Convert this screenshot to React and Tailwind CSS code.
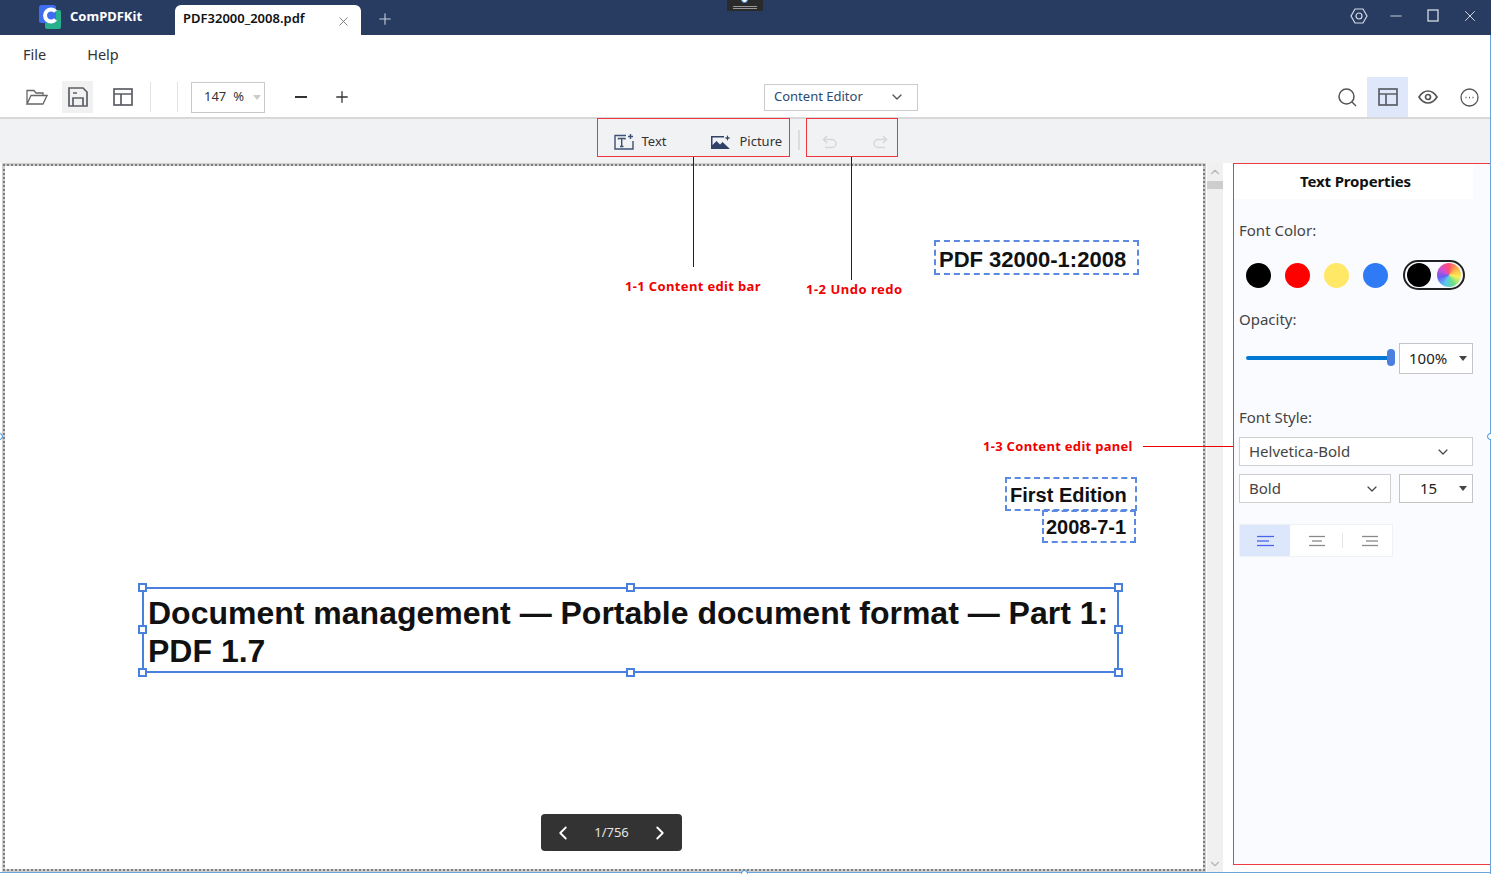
import React from 'react';
import { ChevronDown, ChevronLeft, ChevronRight, ChevronUp, Minus, Plus, X } from 'lucide-react';

const swatches = ['bg-black', 'bg-[#ff0000]', 'bg-[#ffe866]', 'bg-[#2f7bf6]'];

function Logo() {
  return (
    <svg width="22" height="24" viewBox="0 0 22 24">
      <rect x="6" y="5" width="16" height="19" rx="2" fill="#27b08b" />
      <rect x="0" y="0" width="17" height="18" rx="2.5" fill="#3e6df0" />
      <path d="M16.5 6.5A6 6 0 1 0 16.5 14.5" fill="none" stroke="#fff" strokeWidth="4" />
    </svg>
  );
}

function LayoutIcon() {
  return (
    <svg width="20" height="18" viewBox="0 0 20 18" fill="none" stroke="#5c5f66" strokeWidth="1.7">
      <rect x="1" y="1" width="18" height="16" />
      <path d="M1 6h18M8 6v11" />
    </svg>
  );
}

function Triangle({ color = 'border-t-[#444]' }) {
  return <span className={`block h-0 w-0 border-x-4 border-t-[5px] border-x-transparent ${color}`} />;
}

function AlignIcon({ lines, color }) {
  return (
    <svg width="18" height="12" viewBox="0 0 18 12" stroke={color} strokeWidth="1.3">
      {lines.map((l, i) => (
        <path key={i} d={`M${l[0]} ${1.5 + i * 4.5}H${l[1]}`} />
      ))}
    </svg>
  );
}

function TitleBar() {
  return (
    <div className="flex h-[35px] items-end bg-[#283c62] text-white">
      <div className="mb-[6px] ml-[39px] flex w-[136px] items-center gap-[9px]">
        <Logo />
        <span className="text-[13px] font-bold">ComPDFKit</span>
      </div>
      <div className="flex h-[30px] w-[186px] items-start justify-between rounded-t-md bg-white pl-2 pr-[10px] text-[#111]">
        <span className="mt-[4px] text-[13px] font-semibold">PDF32000_2008.pdf</span>
        <X size={15} strokeWidth={1.3} className="mt-[9px] text-[#666]" />
      </div>
      <Plus size={18} strokeWidth={1.5} className="mb-[7px] ml-[15px] text-[#c5cbd6]" />
      <div className="ml-auto mb-[10px] flex items-center gap-[19px] pr-[12px] text-[#d5dae3]">
        <svg width="18" height="18" viewBox="0 0 18 18" fill="none" stroke="currentColor" strokeWidth="1.2">
          <path d="M5 2h8l4 7-4 7H5L1 9z" />
          <circle cx="9" cy="9" r="3" />
        </svg>
        <Minus size={18} strokeWidth={1.2} />
        <svg width="18" height="18" viewBox="0 0 18 18" fill="none" stroke="currentColor" strokeWidth="1.3">
          <rect x="4" y="3" width="10" height="11" />
        </svg>
        <X size={18} strokeWidth={1.3} />
      </div>
    </div>
  );
}

function Toolbar() {
  return (
    <div className="flex h-[41px] items-center pt-px text-[#333]">
      <svg className="ml-[26px]" width="22" height="16" viewBox="0 0 22 16" fill="none" stroke="#666" strokeWidth="1.3">
        <path d="M1 15V1.5h7l2 2.5h7v2.5M1 15h16l4-8.500H5z" />
      </svg>
      <div className="ml-[14px] flex h-[32px] w-[31px] items-center justify-center bg-[#f1f1f1]">
        <svg width="20" height="20" viewBox="0 0 20 20" fill="none" stroke="#5c5f66" strokeWidth="1.7">
          <path d="M1 1h14l4 4v14H1z" />
          <path d="M5 19v-8h10v8M5 6h4" />
        </svg>
      </div>
      <div className="ml-[20px]"><LayoutIcon /></div>
      <div className="ml-[17px] h-[30px] w-px bg-[#e3e3e3]" />
      <div className="ml-[26px] h-[30px] w-px bg-[#e3e3e3]" />
      <div className="ml-[13px] flex h-[31px] w-[74px] items-center border border-[#c9c9c9] pl-[12px] pr-[3px] text-[13px]">
        <span>147</span>
        <span className="ml-[7px]">%</span>
        <span className="ml-auto"><Triangle color="border-t-[#ccc]" /></span>
      </div>
      <div className="ml-[30px] h-[2px] w-[12px] bg-[#333]" />
      <Plus size={18} strokeWidth={1.7} className="ml-[26px]" />
      <div className="ml-[413px] flex h-[27px] w-[154px] items-center justify-between border border-[#ccc] pl-[9px] pr-[12px] text-[13px] text-[#2d4a73]">
        <span>Content Editor</span>
        <ChevronDown size={16} strokeWidth={2} className="text-[#555]" />
      </div>
      <div className="ml-auto flex h-full items-center pr-[12px]">
        <svg width="19" height="19" viewBox="0 0 19 19" fill="none" stroke="#555" strokeWidth="1.5">
          <circle cx="8.500" cy="8.500" r="7.500" />
          <path d="M14 14l4 4" />
        </svg>
        <div className="ml-[10px] flex h-[40px] w-[41px] items-center justify-center bg-[#dfe8fb]">
          <LayoutIcon />
        </div>
        <svg className="ml-[10px]" width="20" height="14" viewBox="0 0 20 14" fill="none" stroke="#555" strokeWidth="1.7">
          <path d="M1 7c2.500-4 5.500-6 9-6s6.500 2 9 6c-2.500 4-5.500 6-9 6s-6.500-2-9-6z" />
          <circle cx="10" cy="7" r="2.500" />
        </svg>
        <svg className="ml-[22px]" width="19" height="19" viewBox="0 0 19 19" fill="none" stroke="#555" strokeWidth="1.3">
          <circle cx="9.500" cy="9.500" r="8.500" />
          <path d="M5.500 9.500h1M9 9.500h1M12.500 9.500h1" strokeWidth="1.6" />
        </svg>
      </div>
    </div>
  );
}

function EditBar() {
  return (
    <div className="flex h-[46px] items-start justify-center border-t-2 border-[#d8d8d8] bg-[#f1f2f4] pl-[3px] text-[13px] text-[#333]">
      <div className="-mt-px flex h-[39px] w-[193px] items-center border border-[#f0353d] pt-[8px]">
        <svg className="ml-[16px]" width="20" height="16" viewBox="0 0 20 16" fill="none" stroke="#3e5175" strokeWidth="1.4">
          <path d="M12 1.500H1v13.500h18V7" />
          <path d="M4.500 5.500v-1H11v1M7.700 4.500v8M6 12.500h3.500" />
          <path d="M16.500 0v5M14 2.500h5" />
        </svg>
        <span className="ml-[8px]">Text</span>
        <svg className="ml-[45px]" width="20" height="16" viewBox="0 0 20 16">
          <path d="M0 2h13v1.500H1.500V11l4-4 3.500 3.500 2.500-2.500 7 6.500V15H0z" fill="#2f4369" />
          <path d="M16.500 1l.8 2.200 2.200.8-2.200.8-.8 2.200-.8-2.200-2.200-.8 2.200-.8z" fill="#2f4369" />
        </svg>
        <span className="ml-[8px]">Picture</span>
      </div>
      <div className="ml-[8px] mt-[11px] h-[20px] w-[2px] bg-[#dcdcdc]" />
      <div className="-mt-px ml-[6px] flex h-[39px] w-[92px] items-center border border-[#f0353d] pt-[8px]">
        <svg className="ml-[15px]" width="15" height="14" viewBox="0 0 15 14" fill="none" stroke="#d6d7d9" strokeWidth="1.5">
          <path d="M5 1L1.500 4.500 5 8M1.500 4.500H10a3.800 3.800 0 0 1 0 8H3" />
        </svg>
        <svg className="ml-[36px]" width="15" height="14" viewBox="0 0 15 14" fill="none" stroke="#d6d7d9" strokeWidth="1.5">
          <path d="M10 1l3.500 3.500L10 8M13.500 4.500H5a3.800 3.800 0 0 0 0 8h7" />
        </svg>
      </div>
    </div>
  );
}

function Handle({ className }) {
  return <span className={`absolute h-[9px] w-[9px] border-2 border-[#4a80dd] bg-white ${className}`} />;
}

function PdfPage() {
  return (
    <div className="h-full w-[1204px] bg-[#cfcfcf] p-px">
      <div className="relative h-full border-2 border-dotted border-[#7d7d7d] bg-white bg-clip-padding font-['Liberation_Sans',sans-serif] font-bold text-[#111]">
        <div className="absolute left-[929px] top-[74px] flex h-[35px] w-[205px] items-center whitespace-nowrap border-2 border-dashed border-[#5b8ae0] pl-[3px] pt-[3px] text-[22px]">
          PDF 32000-1:2008
        </div>
        <div className="absolute left-[1000px] top-[311px] flex h-[34px] w-[132px] items-center whitespace-nowrap border-2 border-dashed border-[#5b8ae0] pl-[3px] pt-[2px] text-[20px]">
          First Edition
        </div>
        <div className="absolute left-[1037px] top-[344px] flex h-[33px] w-[94px] items-center whitespace-nowrap border-2 border-dashed border-[#5b8ae0] pl-[2px] text-[20px]">
          2008-7-1
        </div>
        <div className="absolute left-[137px] top-[421px] h-[86px] w-[977px] border-2 border-[#4a80dd] pl-[4px] pt-[5px] text-[32px] leading-[38px]">
          <div className="whitespace-nowrap">Document management — Portable document format — Part 1:</div>
          <div>PDF 1.7</div>
          <Handle className="-left-[6px] -top-[6px]" />
          <Handle className="left-[482px] -top-[6px]" />
          <Handle className="-right-[6px] -top-[6px]" />
          <Handle className="-left-[6px] top-[36px]" />
          <Handle className="-right-[6px] top-[36px]" />
          <Handle className="-left-[6px] -bottom-[6px]" />
          <Handle className="left-[482px] -bottom-[6px]" />
          <Handle className="-right-[6px] -bottom-[6px]" />
        </div>
        <div className="absolute left-[536px] top-[648px] flex h-[37px] w-[141px] items-center justify-between rounded bg-[#333] px-[11px] font-['Noto_Sans',sans-serif] text-[13px] font-normal text-[#e5e5e5]">
          <ChevronLeft size={22} strokeWidth={2} className="text-white" />
          <span>1/756</span>
          <ChevronRight size={22} strokeWidth={2} className="text-white" />
        </div>
      </div>
    </div>
  );
}

function Scrollbar() {
  return (
    <div className="ml-px flex w-[16px] flex-col items-center bg-[#f0f0f0] pb-px text-[#b5b5b5]">
      <ChevronUp size={14} className="mt-[2px]" />
      <div className="mt-[2px] h-[8px] w-full bg-[#cdcdcd]" />
      <ChevronDown size={14} className="mt-auto" />
    </div>
  );
}

function Panel() {
  return (
    <div className="mb-[7px] w-[258px] border border-[#ee3a42] bg-[#fafbff] text-[#444]">
      <div className="flex h-[35px] w-[239px] items-center justify-center bg-white pl-[4px] text-[15px] font-bold tracking-[-0.15px] text-[#111]">
        Text Properties
      </div>
      <div className="pl-[5px]">
        <div className="mt-[20px] h-[22px] text-[15px] leading-[22px]">Font Color:</div>
        <div className="mt-[19px] flex h-[30px] items-center pl-[7px]">
          {swatches.map((c) => (
            <span key={c} className={`mr-[14px] h-[25px] w-[25px] rounded-full ${c}`} />
          ))}
          <div className="ml-[1px] flex h-[30px] w-[62px] items-center justify-between rounded-full border-2 border-[#222] px-[2px]">
            <span className="h-[24px] w-[24px] rounded-full bg-black" />
            <span className="h-[24px] w-[24px] rounded-full bg-[conic-gradient(#ff4d6d,#ffb347,#f6f05c,#6be08a,#58c8f0,#6b5cf0,#d64fd0,#ff4d6d)]" />
          </div>
        </div>
        <div className="mt-[18px] h-[22px] text-[15px] leading-[22px]">Opacity:</div>
        <div className="mt-[13px] flex h-[31px] items-center">
          <div className="relative -mt-[2px] ml-[7px] h-[4px] w-[146px] rounded-full bg-[#0078d4]">
            <span className="absolute -top-[7px] right-[-3px] h-[17px] w-[8px] rounded bg-[#4a7fe0]" />
          </div>
          <div className="ml-[7px] flex h-[31px] w-[74px] items-center justify-between border border-[#c4c4c4] bg-white pl-[9px] pr-[5px] text-[15px] text-[#222]">
            <span>100%</span>
            <Triangle />
          </div>
        </div>
        <div className="mt-[32px] h-[22px] text-[15px] leading-[22px]">Font Style:</div>
        <div className="mt-[9px] flex h-[29px] w-[234px] items-center justify-between border border-[#cfcfcf] bg-white pl-[9px] pr-[22px] text-[15px]">
          <span>Helvetica-Bold</span>
          <ChevronDown size={16} strokeWidth={1.8} className="-mr-[1px]" />
        </div>
        <div className="mt-[8px] flex h-[29px]">
          <div className="flex w-[152px] items-center justify-between border border-[#cfcfcf] bg-white pl-[9px] pr-[4px] text-[15px]">
            <span>Bold</span>
            <ChevronDown size={16} strokeWidth={1.8} className="mr-[6px]" />
          </div>
          <div className="ml-[8px] flex w-[74px] items-center border border-[#c4c4c4] bg-white pl-[20px] pr-[5px] text-[15px] text-[#222]">
            <span>15</span>
            <span className="ml-auto"><Triangle /></span>
          </div>
        </div>
        <div className="mt-[21px] flex h-[33px] w-[154px] border border-[#f0f1f4] bg-white">
          <div className="flex w-[51px] items-center justify-center bg-[#dde7fb]">
            <AlignIcon lines={[[1, 18], [1, 13], [1, 18]]} color="#4a63e8" />
          </div>
          <div className="flex w-[52px] items-center justify-center pl-[3px]">
            <AlignIcon lines={[[1, 17], [4, 14], [1, 17]]} color="#8a8a8a" />
          </div>
          <div className="my-[8px] w-px bg-[#e6e6e6]" />
          <div className="flex w-[50px] items-center justify-center pl-[5px]">
            <AlignIcon lines={[[1, 17], [5, 17], [1, 17]]} color="#8a8a8a" />
          </div>
        </div>
      </div>
    </div>
  );
}

function Callouts() {
  return (
    <>
      <div className="absolute left-[693px] top-[157px] h-[110px] w-px bg-[#222]" />
      <div className="absolute left-[851px] top-[157px] h-[123px] w-px bg-[#222]" />
      <div className="absolute left-[1143px] top-[446px] h-px w-[90px] bg-[#e00]" />
      <span className="absolute left-[625px] top-[277px] text-[13px] font-bold tracking-[0.35px] text-[#f00000]">1-1 Content edit bar</span>
      <span className="absolute left-[806px] top-[280px] text-[13px] font-bold tracking-[0.5px] text-[#f00000]">1-2 Undo redo</span>
      <span className="absolute left-[983px] top-[437px] text-[13px] font-bold tracking-[0.3px] text-[#f00000]">1-3 Content edit panel</span>
    </>
  );
}

// rahmen vom screenshot-tool, liegt ueber allem
function CaptureFrame() {
  const dot = 'absolute h-[7px] w-[7px] rounded-full border border-[#2f8ee8] bg-white';
  return (
    <>
      <div className="absolute bottom-[1px] left-0 h-px w-full bg-[#6aa5dc]" />
      <div className="absolute right-0 top-[35px] h-full w-px bg-[#6aa5dc]" />
      <div className="absolute left-[727px] top-0 flex h-[11px] w-[36px] items-end justify-center bg-[#2a2a2a] pb-[2px]">
        <div className="h-[3px] w-[24px] border-y border-[#999]" />
      </div>
      <span className={`${dot} left-[741px] -top-[4px]`} />
      <span className={`${dot} -left-[4px] top-[433px]`} />
      <span className={`${dot} -right-[3px] top-[433px]`} />
      <span className={`${dot} left-[741px] bottom-[-3px]`} />
    </>
  );
}

export default function App() {
  return (
    <div className="relative flex h-[874px] w-[1491px] flex-col overflow-hidden bg-white font-['Noto_Sans',sans-serif]">
      <TitleBar />
      <div className="flex h-[41px] items-center gap-[41px] pb-[2px] pl-[23px] text-[14.500px] text-[#333]">
        <span>File</span>
        <span>Help</span>
      </div>
      <Toolbar />
      <EditBar />
      <div className="flex min-h-0 flex-1 pb-[2px] pl-[2px]">
        <PdfPage />
        <Scrollbar />
        <div className="w-[10px]" />
        <Panel />
      </div>
      <Callouts />
      <CaptureFrame />
    </div>
  );
}
